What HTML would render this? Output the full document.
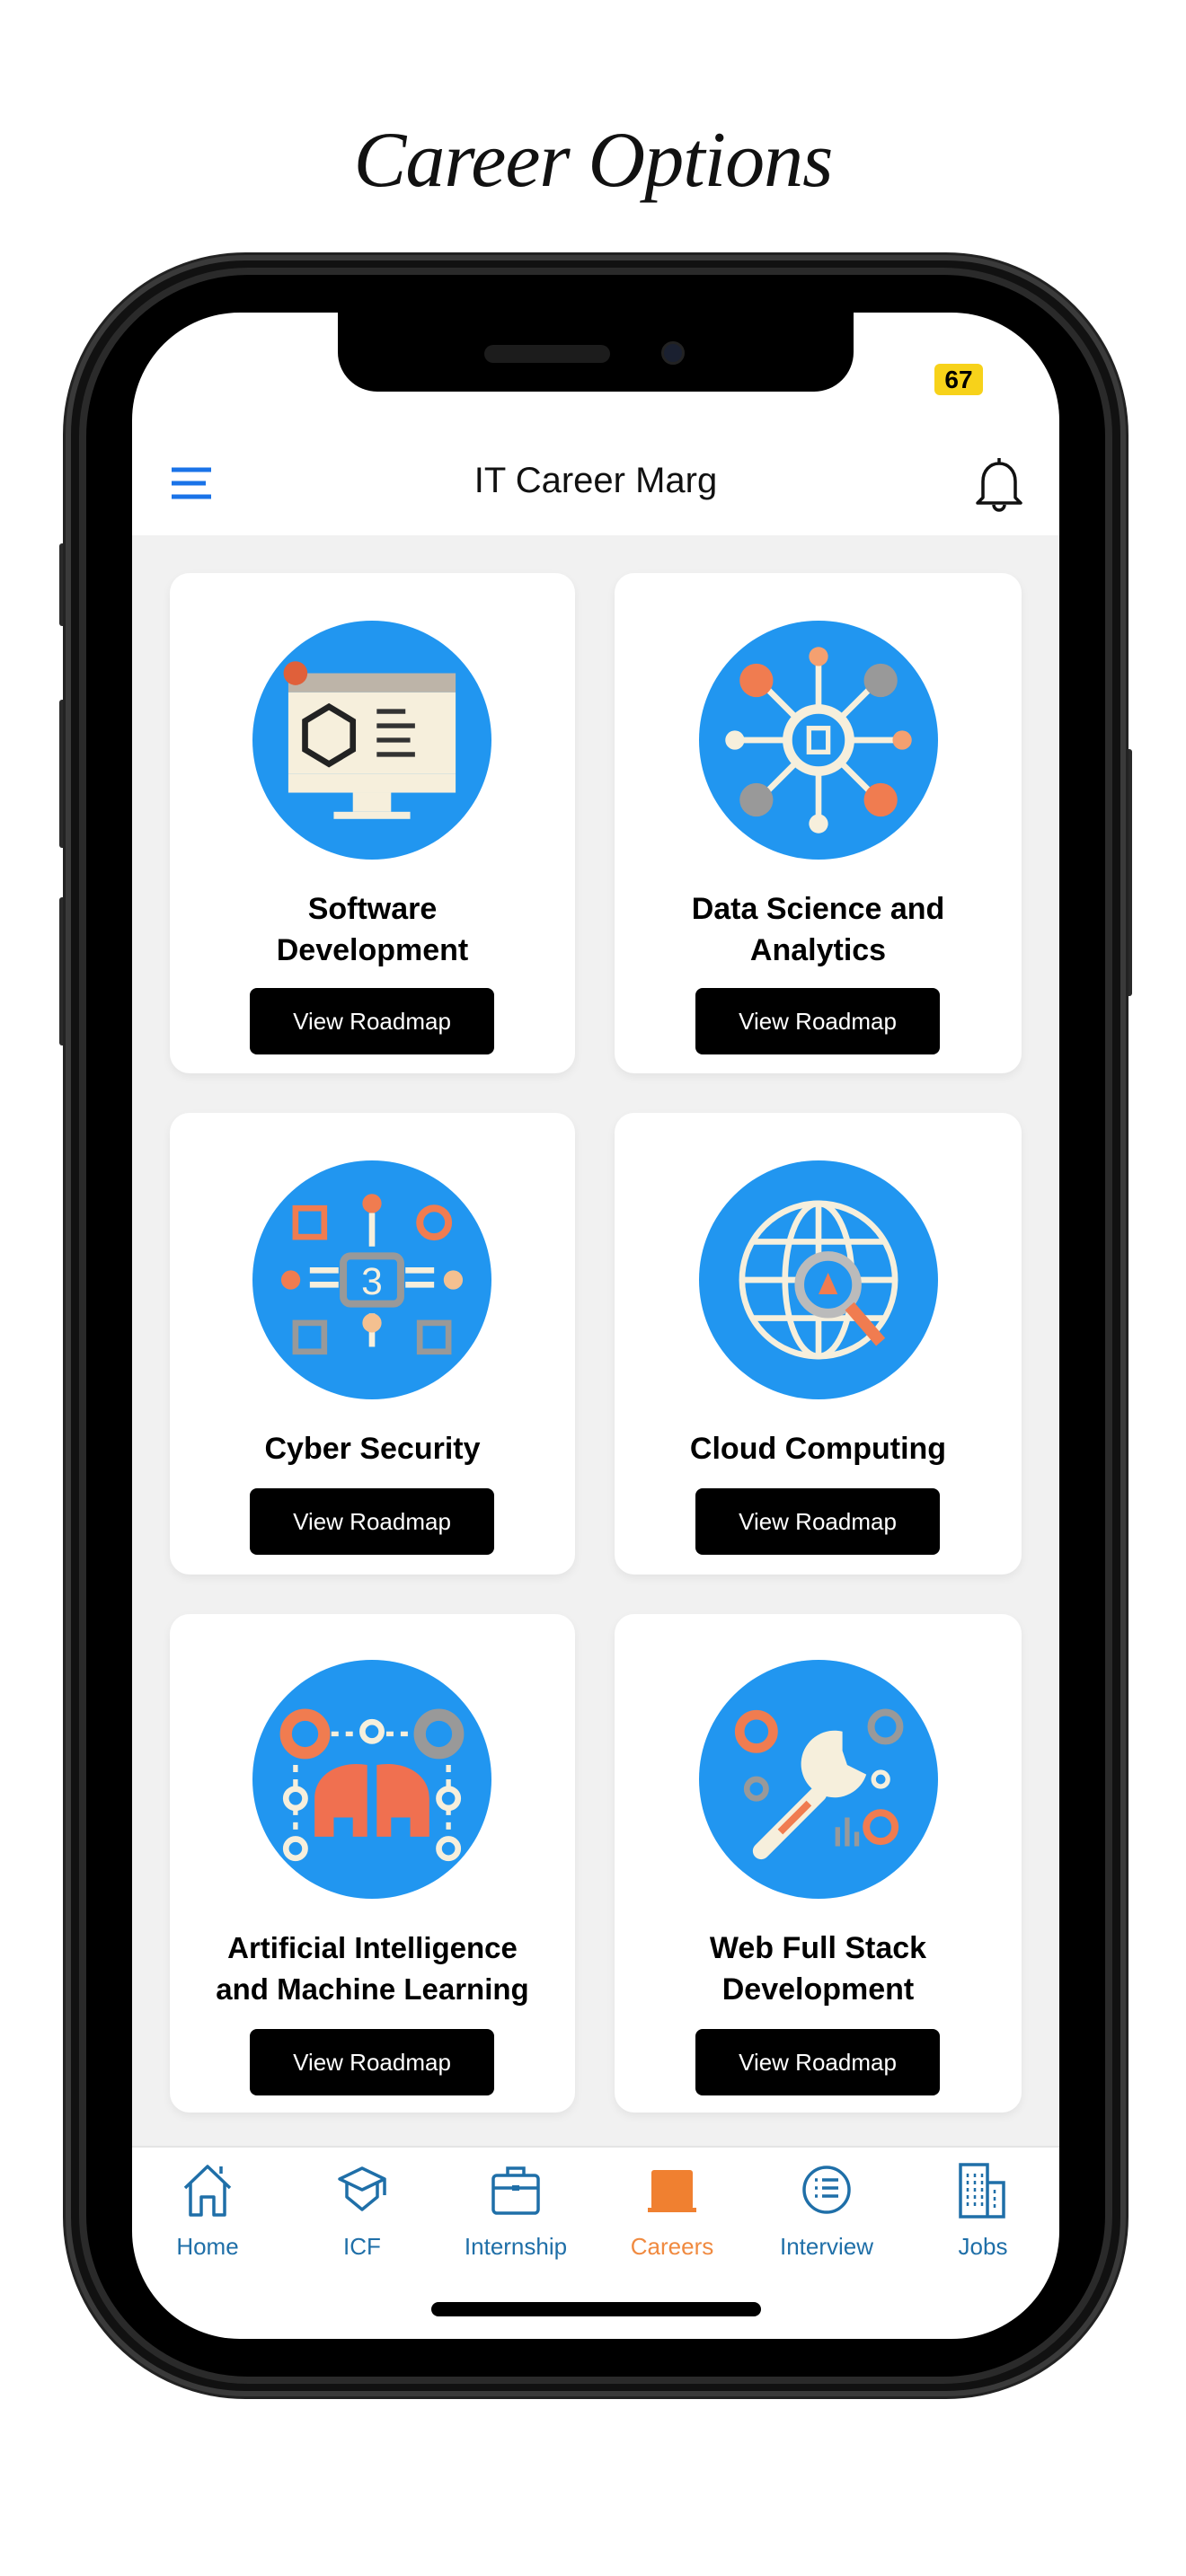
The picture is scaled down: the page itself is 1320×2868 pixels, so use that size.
<!DOCTYPE html>
<html><head><meta charset="utf-8">
<style>
*{margin:0;padding:0;box-sizing:border-box}
body{width:1320px;height:2868px;background:#fff;position:relative;overflow:hidden;font-family:"Liberation Sans",sans-serif}
.abs{position:absolute}
.title{left:0;width:1320px;top:128px;text-align:center;font-family:"Liberation Serif",serif;font-style:italic;font-size:88px;color:#111;letter-spacing:-1px;font-weight:normal}
.phone{left:73px;top:284px;width:1180px;height:2384px;border-radius:200px;background:#111;border:6px solid #3a3a3a;box-shadow:0 0 0 3px #222}
.phone2{left:88px;top:298px;width:1150px;height:2356px;border-radius:188px;border:8px solid #2a2a2a;background:#000}
.screen{left:147px;top:348px;width:1032px;height:2256px;border-radius:120px;background:#fff;overflow:hidden}
.notch{left:229px;top:0;width:574px;height:88px;background:#000;border-radius:0 0 44px 44px}
.gray{left:0;top:248px;width:1032px;height:1793px;background:#f1f1f1}
.card{position:absolute;background:#fff;border-radius:22px;box-shadow:0 4px 10px rgba(0,0,0,.06)}
.ct{position:absolute;width:451px;text-align:center;font-weight:bold;font-size:34px;line-height:46px;color:#000}
.btn{position:absolute;width:272px;height:74px;background:#000;color:#fff;border-radius:8px;font-size:26px;text-align:center;line-height:74px}
.circ{position:absolute;width:266px;height:266px}
.nav{position:absolute;top:2486px;font-size:26px;color:#1f6fa8;text-align:center;width:160px;margin-left:-80px}
.ni{position:absolute;top:2406px;width:70px;height:64px;margin-left:-35px}
.side{position:absolute;background:#2a2a2a;border-radius:3px}
</style></head><body>
<div class="abs title">Career Options</div>
<div class="side" style="left:66px;top:605px;width:12px;height:92px"></div>
<div class="side" style="left:66px;top:779px;width:12px;height:165px"></div>
<div class="side" style="left:66px;top:999px;width:12px;height:165px"></div>
<div class="side" style="left:1248px;top:834px;width:12px;height:275px"></div>
<div class="abs phone"></div>
<div class="abs phone2"></div>
<div class="abs screen">
  <div class="abs notch">
    <div class="abs" style="left:163px;top:36px;width:140px;height:20px;border-radius:10px;background:#1c1c1c"></div>
    <div class="abs" style="left:360px;top:32px;width:26px;height:26px;border-radius:50%;background:#1a2030;border:3px solid #222"></div>
  </div>
  <div class="abs" style="left:893px;top:57px;width:54px;height:35px;background:#f7d21a;border-radius:6px;font-weight:bold;font-size:28px;line-height:35px;text-align:center">67</div>
  <svg class="abs" style="left:42px;top:170px" width="50" height="40" viewBox="0 0 50 40"><path d="M2 5H46M2 20H40M2 35H46" stroke="#1a73e8" stroke-width="5"/></svg>
  <div class="abs" style="left:0;width:1032px;top:165px;text-align:center;font-size:40px;color:#111">IT Career Marg</div>
  <svg class="abs" style="left:935px;top:158px" width="60" height="66" viewBox="0 0 60 66"><path d="M30 4V9M12 48V30C12 18 20 10 30 10S48 18 48 30V48L54 54H6Z" fill="none" stroke="#111" stroke-width="3.5" stroke-linejoin="round"/><path d="M24 56A6 6 0 0 0 36 56" fill="none" stroke="#111" stroke-width="3.5"/></svg>
  <div class="abs gray"></div>
</div>

<div class="card" style="left:189px;top:638px;width:451px;height:557px"></div>
<div class="card" style="left:684px;top:638px;width:453px;height:557px"></div>
<div class="card" style="left:189px;top:1239px;width:451px;height:514px"></div>
<div class="card" style="left:684px;top:1239px;width:453px;height:514px"></div>
<div class="card" style="left:189px;top:1797px;width:451px;height:555px"></div>
<div class="card" style="left:684px;top:1797px;width:453px;height:555px"></div>

<svg class="circ" style="left:281px;top:691px" viewBox="0 0 100 100"><circle cx="50" cy="50" r="50" fill="#2196f0"/><rect x="15" y="22" width="70" height="8" fill="#bdb4a8"/><circle cx="18" cy="22" r="5" fill="#e0603a"/><rect x="15" y="30" width="70" height="34" fill="#f6efdc"/><rect x="15" y="64" width="70" height="8" fill="#f6efdc"/><rect x="42" y="72" width="16" height="8" fill="#f6efdc"/><rect x="34" y="80" width="32" height="3" fill="#f6efdc"/><path d="M32 36L42 42V54L32 60L22 54V42Z" fill="none" stroke="#222" stroke-width="2.5"/><path d="M52 38H64M52 44H68M52 50H66M52 56H68" stroke="#333" stroke-width="2"/></svg>
<svg class="circ" style="left:778px;top:691px" viewBox="0 0 100 100"><circle cx="50" cy="50" r="50" fill="#2196f0"/><g stroke="#f6efdc" stroke-width="2.5"><path d="M50 15V85M15 50H85M25 25L75 75M75 25L25 75"/></g><circle cx="50" cy="50" r="13" fill="#2196f0" stroke="#f6efdc" stroke-width="4"/><rect x="46" y="45" width="8" height="10" fill="none" stroke="#f6efdc" stroke-width="2"/><circle cx="24" cy="25" r="7" fill="#f07c50"/><circle cx="76" cy="25" r="7" fill="#999"/><circle cx="24" cy="75" r="7" fill="#999"/><circle cx="76" cy="75" r="7" fill="#f07c50"/><circle cx="50" cy="15" r="4" fill="#f4a070"/><circle cx="50" cy="85" r="4" fill="#f6efdc"/><circle cx="15" cy="50" r="4" fill="#f6efdc"/><circle cx="85" cy="50" r="4" fill="#f4a070"/></svg>
<svg class="circ" style="left:281px;top:1292px" viewBox="0 0 100 100"><circle cx="50" cy="50" r="50" fill="#2196f0"/><rect x="38" y="40" width="24" height="20" rx="3" fill="none" stroke="#999" stroke-width="3"/><text x="50" y="56" font-size="16" text-anchor="middle" fill="#f6efdc" font-family="Liberation Sans">3</text><rect x="18" y="20" width="12" height="12" fill="none" stroke="#f07c50" stroke-width="2.5"/><circle cx="76" cy="26" r="6" fill="none" stroke="#f07c50" stroke-width="3"/><rect x="18" y="68" width="12" height="12" fill="none" stroke="#999" stroke-width="2.5"/><rect x="70" y="68" width="12" height="12" fill="none" stroke="#999" stroke-width="2.5"/><g stroke="#f6efdc" stroke-width="2.5"><path d="M24 46H36M24 52H36M64 46H76M64 52H76M50 22V36M50 64V78"/></g><circle cx="50" cy="18" r="4" fill="#f07c50"/><circle cx="16" cy="50" r="4" fill="#f07c50"/><circle cx="84" cy="50" r="4" fill="#f4c090"/><circle cx="50" cy="68" r="4" fill="#f4c090"/></svg>
<svg class="circ" style="left:778px;top:1292px" viewBox="0 0 100 100"><circle cx="50" cy="50" r="50" fill="#2196f0"/><g fill="none" stroke="#f6efdc" stroke-width="2.5"><circle cx="50" cy="50" r="32"/><ellipse cx="50" cy="50" rx="14" ry="32"/><path d="M18 50H82M22 34H78M22 66H78M50 18V82"/></g><circle cx="54" cy="52" r="12" fill="#2196f0" stroke="#bbb" stroke-width="4"/><path d="M50 56L54 47L58 56Z" fill="#f07c50"/><path d="M63 61L76 76" stroke="#f07c50" stroke-width="5"/></svg>
<svg class="circ" style="left:281px;top:1848px" viewBox="0 0 100 100"><circle cx="50" cy="50" r="50" fill="#2196f0"/><circle cx="22" cy="31" r="8" fill="none" stroke="#f07c50" stroke-width="5"/><circle cx="78" cy="31" r="8" fill="none" stroke="#999" stroke-width="5"/><circle cx="50" cy="30" r="4" fill="none" stroke="#f6efdc" stroke-width="2.5"/><path d="M33 31H44M56 31H67M18 44V80M82 44V80" stroke="#f6efdc" stroke-width="2" stroke-dasharray="3 3"/><circle cx="18" cy="58" r="4" fill="#2196f0" stroke="#f6efdc" stroke-width="2.5"/><circle cx="82" cy="58" r="4" fill="#2196f0" stroke="#f6efdc" stroke-width="2.5"/><circle cx="18" cy="79" r="4" fill="#2196f0" stroke="#f6efdc" stroke-width="2.5"/><circle cx="82" cy="79" r="4" fill="#2196f0" stroke="#f6efdc" stroke-width="2.5"/><path d="M26 74V58C26 48 36 42 48 44V74H42V66H34V74ZM52 74V44C64 42 74 48 74 58V74H66V66H58V74Z" fill="#f07050"/></svg>
<svg class="circ" style="left:778px;top:1848px" viewBox="0 0 100 100"><circle cx="50" cy="50" r="50" fill="#2196f0"/><path d="M26 80L50 56" stroke="#f6efdc" stroke-width="7" stroke-linecap="round"/><path d="M34 72L46 60" stroke="#f07c50" stroke-width="3"/><path d="M60 30A14 14 0 1 0 70 48L62 44L60 38Z" fill="#f6efdc"/><circle cx="24" cy="30" r="7" fill="none" stroke="#f07c50" stroke-width="4"/><circle cx="78" cy="28" r="6" fill="none" stroke="#999" stroke-width="3"/><circle cx="24" cy="54" r="4" fill="none" stroke="#999" stroke-width="2.5"/><circle cx="76" cy="70" r="6" fill="none" stroke="#f07c50" stroke-width="3"/><circle cx="76" cy="50" r="3" fill="none" stroke="#f6efdc" stroke-width="2"/><path d="M58 78V70M62 78V66M66 78V72" stroke="#999" stroke-width="2"/></svg>

<div class="ct" style="left:189px;top:989px">Software<br>Development</div>
<div class="ct" style="left:685px;top:989px">Data Science and<br>Analytics</div>
<div class="ct" style="left:189px;top:1590px">Cyber Security</div>
<div class="ct" style="left:685px;top:1590px">Cloud Computing</div>
<div class="ct" style="left:189px;top:2146px;font-size:33px">Artificial Intelligence<br>and Machine Learning</div>
<div class="ct" style="left:685px;top:2146px">Web Full Stack<br>Development</div>

<div class="btn" style="left:278px;top:1100px">View Roadmap</div>
<div class="btn" style="left:774px;top:1100px">View Roadmap</div>
<div class="btn" style="left:278px;top:1657px">View Roadmap</div>
<div class="btn" style="left:774px;top:1657px">View Roadmap</div>
<div class="btn" style="left:278px;top:2259px">View Roadmap</div>
<div class="btn" style="left:774px;top:2259px">View Roadmap</div>

<div class="abs" style="left:147px;top:2389px;width:1032px;height:2px;background:#e4e4e4"></div>
<svg class="ni" style="left:231px" viewBox="0 0 70 64"><path d="M10 30L35 6L60 30M16 25V60H28V40H42V60H54V25M50 6V14" fill="none" stroke="#1f6fa8" stroke-width="3.5" stroke-linejoin="round"/></svg>
<svg class="ni" style="left:403px" viewBox="0 0 70 64"><path d="M35 8L60 20L35 32L10 20Z M18 24V40L35 54L52 40V24M60 20V38" fill="none" stroke="#1f6fa8" stroke-width="3.5" stroke-linejoin="round"/></svg>
<svg class="ni" style="left:574px" viewBox="0 0 70 64"><rect x="10" y="16" width="50" height="42" rx="4" fill="none" stroke="#1f6fa8" stroke-width="3.5"/><path d="M26 16V8H44V16M10 30H60" fill="none" stroke="#1f6fa8" stroke-width="3.5"/><rect x="31" y="27" width="8" height="6" fill="#1f6fa8"/></svg>
<svg class="ni" style="left:748px" viewBox="0 0 70 64"><rect x="12" y="10" width="46" height="44" rx="3" fill="#f08030"/><rect x="8" y="52" width="54" height="5" fill="#f08030"/></svg>
<svg class="ni" style="left:920px" viewBox="0 0 70 64"><circle cx="35" cy="32" r="25" fill="none" stroke="#1f6fa8" stroke-width="3.5"/><path d="M30 21H48M30 30H48M30 39H48M22 21H25M22 30H25M22 39H25" stroke="#1f6fa8" stroke-width="3.5"/></svg>
<svg class="ni" style="left:1094px" viewBox="0 0 70 64"><path d="M10 62V4H40V62ZM40 24H58V62H10" fill="none" stroke="#1f6fa8" stroke-width="3.5"/><path d="M18 14V54M26 14V54M34 14V54M48 32V54" stroke="#1f6fa8" stroke-width="2.5" stroke-dasharray="4 4"/></svg>
<div class="nav" style="left:231px">Home</div>
<div class="nav" style="left:403px">ICF</div>
<div class="nav" style="left:574px">Internship</div>
<div class="nav" style="left:748px;color:#f08a40">Careers</div>
<div class="nav" style="left:920px">Interview</div>
<div class="nav" style="left:1094px">Jobs</div>
<div class="abs" style="left:480px;top:2563px;width:367px;height:16px;border-radius:8px;background:#000"></div>
</body></html>
